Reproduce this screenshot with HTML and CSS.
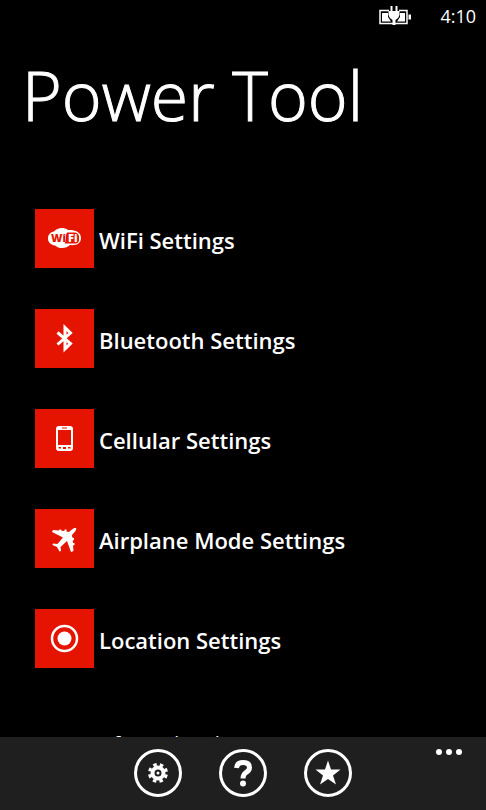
FILE: index.html
```html
<!DOCTYPE html>
<html lang="en">
<head>
<meta charset="utf-8">
<meta name="viewport" content="width=device-width, initial-scale=1">
<title>Power Tool</title>
<link rel="stylesheet" href="styles.css">
</head>
<body>
<header class="status">
  <svg class="battery" width="34" height="20" viewBox="0 0 34 20" role="img" aria-label="Battery charging">
    <path d="M11 4.500H2V17.500H29V4.500H21" fill="none" stroke="#fff" stroke-width="1.500"/>
    <path d="M4 7H10V11L13 15.500H4ZM22 7H27V15.500H19L22 11Z" fill="#fff"/>
    <path d="M30.500 8.500H33V13.500H30.500Z" fill="#fff"/>
    <path d="M12.500 0H14.500V5H17.500V0H19.500V5H21.500V9Q21 12 17.500 14V19H14.500V14Q11 12 10.500 9V5H12.500Z" fill="#fff"/>
  </svg>
  <time class="clock">4:10</time>
</header>
<main class="page">
  <h1 class="title">Power Tool</h1>
  <nav class="list">
    <a class="item" href="#wifi">
      <span class="tile"><svg width="59" height="59" viewBox="0 0 59 59">
        <path d="M19 22.500C22 19 28 17.500 33 21C39 20.500 46 22.500 46 29C46 36 39 36.500 35 36C31 40 24 40 20 36.500C16 36 13 33.500 13 29.500C13 25.500 15.500 23 19 22.500Z" fill="#fff"/>
        <path d="M32 23.500H40Q44 24 44 28V31Q44 34.500 40 34.500H29.500Q31 33 31 29V26Z" fill="#e51400"/>
        <text class="wifi-dark" x="16" y="33">Wi</text>
        <text class="wifi-light" x="33" y="33">Fi</text>
      </svg></span>
      <span class="label">WiFi Settings</span>
    </a>
    <a class="item" href="#bluetooth">
      <span class="tile"><svg width="59" height="59" viewBox="0 0 59 59">
        <path d="M22.500 23.500L35.500 34.500L30 40V18.500L35.500 24L22.500 35.500" fill="none" stroke="#fff" stroke-width="3"/>
      </svg></span>
      <span class="label">Bluetooth Settings</span>
    </a>
    <a class="item" href="#cellular">
      <span class="tile"><svg width="59" height="59" viewBox="0 0 59 59">
        <path fill-rule="evenodd" d="M24 17H35Q38 17 38 20V39Q38 42 35 42H24Q21 42 21 39V20Q21 17 24 17ZM23 21V36H36V21ZM27 18.500V19.500H32V18.500ZM23.500 38V39.500H26V38ZM28 38V40H31V38ZM33 38V39.500H35.500V38Z" fill="#fff"/>
      </svg></span>
      <span class="label">Cellular Settings</span>
    </a>
    <a class="item" href="#airplane">
      <span class="tile"><svg width="59" height="59" viewBox="0 0 59 59">
        <path d="M41 19C39 18.500 36.500 20.500 34 23L31.500 22.500V20.500H29.500V22L26.500 21.700L26 20.500H24.500L24 21.500L18 21L17 23L28 28.500C26 31 24 33 22.500 35L18 34.500L17.500 36L22 38L24.500 42.500L26 42L25.500 38L32 32L36 43L38.500 42L38 36.500L39.500 36V34L38 34L37.700 31.500L39 31V29L37.200 28.500L37 26C39.500 23.500 42 20.500 41 19Z" fill="#fff"/>
      </svg></span>
      <span class="label">Airplane Mode Settings</span>
    </a>
    <a class="item" href="#location">
      <span class="tile"><svg width="59" height="59" viewBox="0 0 59 59">
        <circle cx="29.500" cy="29.500" r="12.500" fill="none" stroke="#fff" stroke-width="2.500"/>
        <circle cx="29.500" cy="29.500" r="7" fill="#fff"/>
      </svg></span>
      <span class="label">Location Settings</span>
    </a>
  </nav>
  <p class="note">a free ad scale</p>
</main>
<footer class="appbar">
  <button class="round" type="button" aria-label="Settings"><svg width="48" height="48" viewBox="0 0 48 48">
    <circle cx="24" cy="24" r="22.500" fill="none" stroke="#fff" stroke-width="3"/>
    <circle cx="24" cy="24" r="5.500" fill="none" stroke="#fff" stroke-width="4"/>
    <circle cx="24" cy="24" r="8.500" fill="none" stroke="#fff" stroke-width="3" stroke-dasharray="3.500 3.176" stroke-dashoffset="-1.600"/>
    <circle cx="24" cy="24" r="1.500" fill="#fff"/>
  </svg></button>
  <button class="round" type="button" aria-label="Help"><svg width="48" height="48" viewBox="0 0 48 48">
    <circle cx="24" cy="24" r="22.500" fill="none" stroke="#fff" stroke-width="3"/>
    <path d="M17.500 19Q18 13.500 24 13.500Q30.500 13.500 30.500 18.500Q30.500 21.500 27 23.500Q24 25.500 24 29.500" fill="none" stroke="#fff" stroke-width="5"/>
    <circle cx="24" cy="34.500" r="3" fill="#fff"/>
  </svg></button>
  <button class="round" type="button" aria-label="Rate"><svg width="48" height="48" viewBox="0 0 48 48">
    <circle cx="24" cy="24" r="22.500" fill="none" stroke="#fff" stroke-width="3"/>
    <path d="M24 11.500L27 20.500H36.500L29 26.500L32 35.500L24 30L16 35.500L19 26.500L11.500 20.500H21Z" fill="#fff"/>
  </svg></button>
  <button class="more" type="button" aria-label="More"><svg width="26" height="6" viewBox="0 0 26 6">
    <circle cx="3" cy="3" r="3" fill="#fff"/><circle cx="13" cy="3" r="3" fill="#fff"/><circle cx="23" cy="3" r="3" fill="#fff"/>
  </svg></button>
</footer>
</body>
</html>
```
FILE: styles.css
```css
* {
  box-sizing: border-box;
}

body {
  margin: 0;
  height: 100vh;
  display: flex;
  flex-direction: column;
  overflow: hidden;
  background: #000;
  color: #fff;
  font-family: "Open Sans", "Noto Sans", sans-serif;
}

svg {
  display: block;
}

.status {
  display: flex;
  justify-content: flex-end;
  align-items: center;
  gap: 28px;
  height: 32px;
  padding-right: 10px;
}

.clock {
  font-size: 18px;
  line-height: 32px;
}

.page {
  flex: 1;
  min-height: 0;
  overflow: hidden;
}

.title {
  margin: 0;
  padding: 15px 22px 0;
  font-size: 68px;
  line-height: 96px;
  font-weight: 300;
  -webkit-text-stroke: 1px #fff;
  white-space: nowrap;
}

.list {
  display: flex;
  flex-direction: column;
  gap: 41px;
  padding: 66px 35px 0;
}

.item {
  display: flex;
  align-items: center;
  gap: 5px;
  color: inherit;
  text-decoration: none;
}

.tile {
  flex: none;
  background: #e51400;
}

.wifi-dark,
.wifi-light {
  font-size: 11px;
  font-weight: 800;
}

.wifi-dark {
  fill: #e51400;
}

.wifi-light {
  fill: #fff;
}

.label {
  padding-top: 2px;
  font-size: 22px;
  line-height: 30px;
  font-weight: 600;
}

.note {
  margin: 0;
  padding: 61px 0 0 97px;
  font-size: 20px;
  line-height: 30px;
  white-space: nowrap;
}

.appbar {
  position: relative;
  display: flex;
  justify-content: center;
  gap: 37px;
  flex: none;
  padding: 12px 0 13px;
  background: #1f1f1f;
}

.round,
.more {
  padding: 0;
  border: 0;
  background: none;
  cursor: pointer;
}

.more {
  position: absolute;
  top: 12px;
  right: 24px;
}
```
